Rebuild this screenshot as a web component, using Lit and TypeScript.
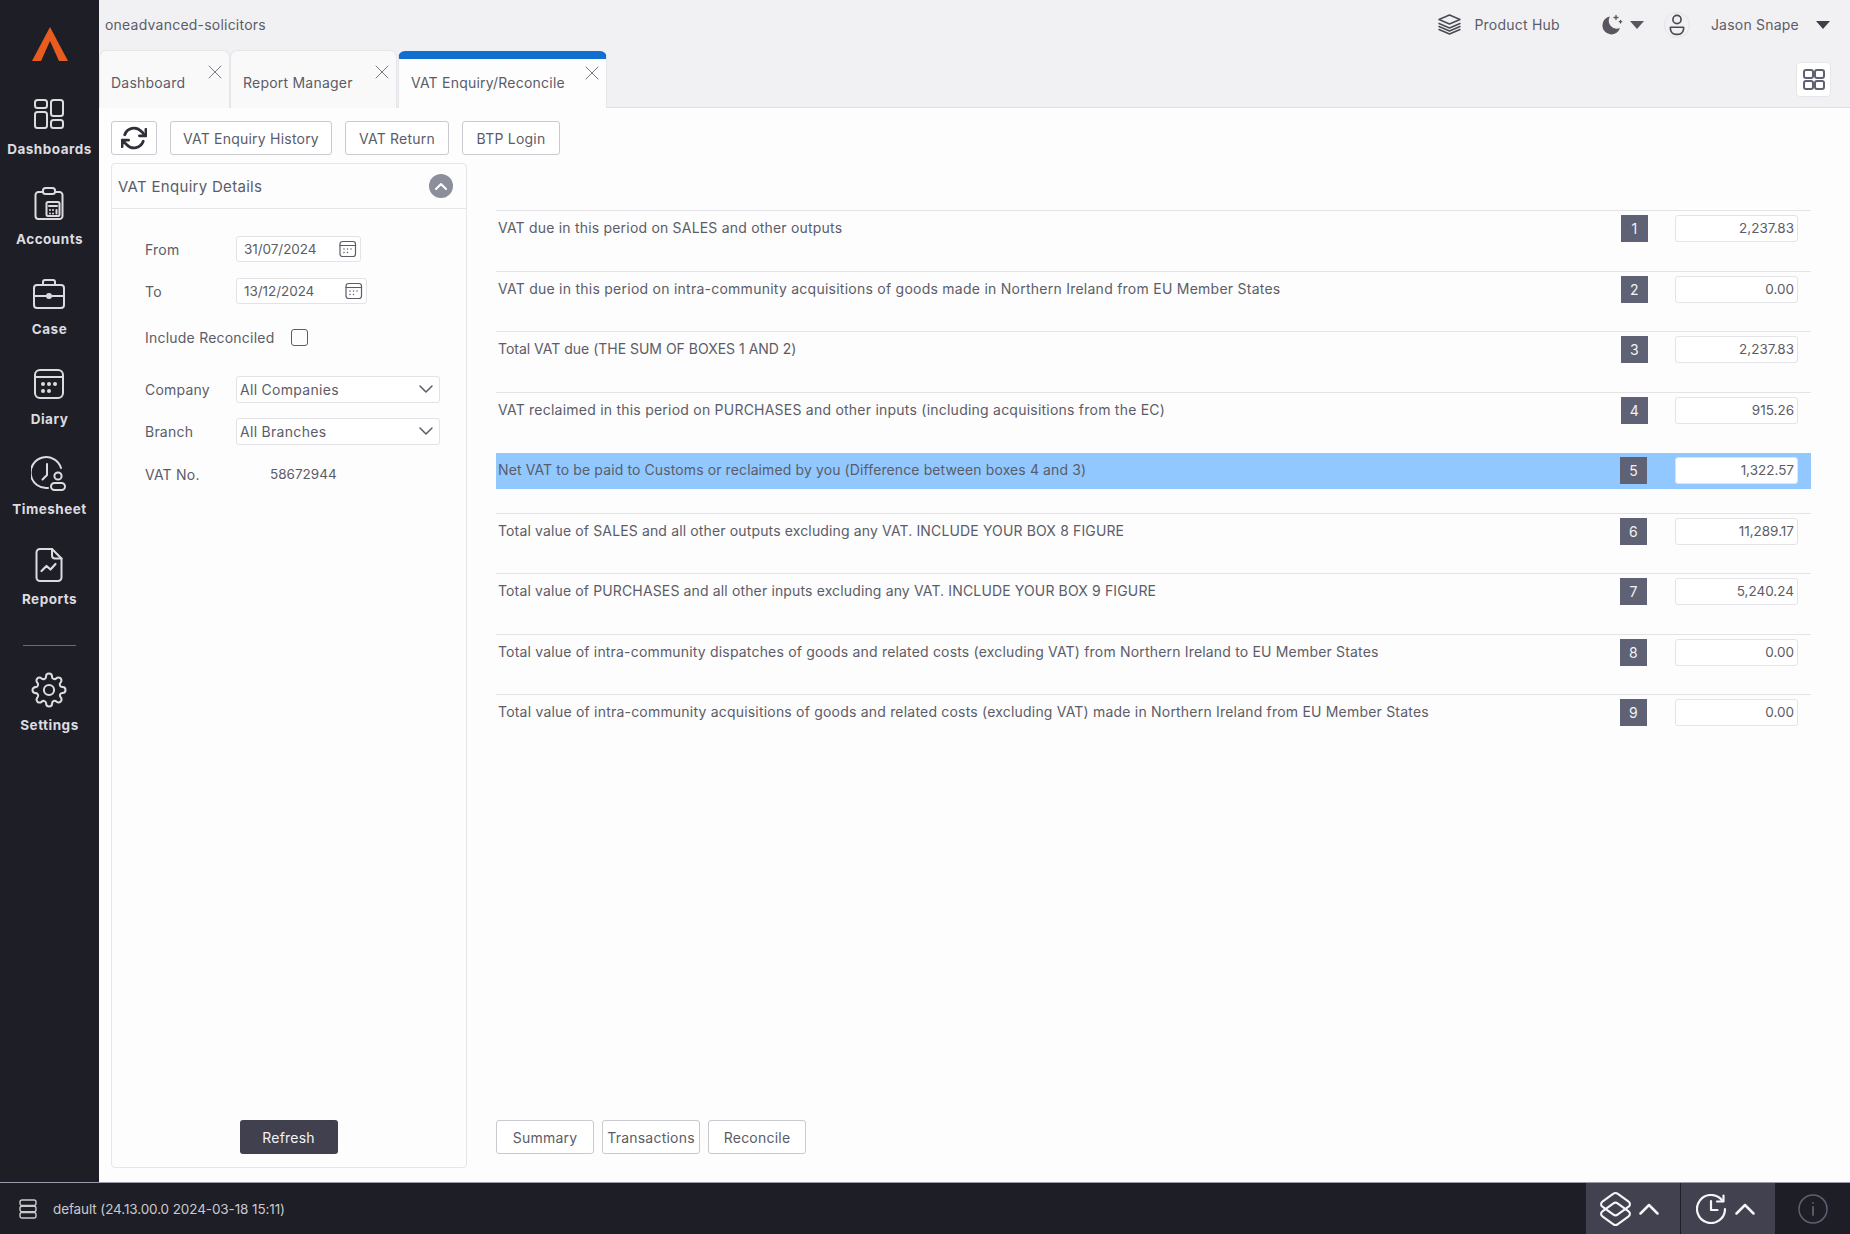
import { LitElement, html, css, svg } from "lit";
import { customElement } from "lit/decorators.js";

const rows: [string, string, number][] = [
  ["VAT due in this period on SALES and other outputs", "2,237.83", 0.2],
  ["VAT due in this period on intra-community acquisitions of goods made in Northern Ireland from EU Member States", "0.00", 0.25],
  ["Total VAT due (THE SUM OF BOXES 1 AND 2)", "2,237.83", -0.01],
  ["VAT reclaimed in this period on PURCHASES and other inputs (including acquisitions from the EC)", "915.26", 0.23],
  ["Net VAT to be paid to Customs or reclaimed by you (Difference between boxes 4 and 3)", "1,322.57", 0.11],
  ["Total value of SALES and all other outputs excluding any VAT. INCLUDE YOUR BOX 8 FIGURE", "11,289.17", 0.14],
  ["Total value of PURCHASES and all other inputs excluding any VAT. INCLUDE YOUR BOX 9 FIGURE", "5,240.24", 0.14],
  ["Total value of intra-community dispatches of goods and related costs (excluding VAT) from Northern Ireland to EU Member States", "0.00", 0.18],
  ["Total value of intra-community acquisitions of goods and related costs (excluding VAT) made in Northern Ireland from EU Member States", "0.00", 0.2],
];

const I = (w: number, h: number, vb: string, body: unknown, cls = "") =>
  html`<svg class=${cls} width=${w} height=${h} viewBox=${vb} fill="none" stroke="currentColor" stroke-width="2" stroke-linecap="round" stroke-linejoin="round">${body}</svg>`;

const navIcons: Record<string, unknown> = {
  Dashboards: I(32, 32, "0 0 32 32", svg`<rect x="2" y="2" width="12" height="8" rx="2.5"/><rect x="2" y="14" width="12" height="16" rx="2.5"/><rect x="18" y="2" width="12" height="16" rx="2.5"/><rect x="18" y="22" width="12" height="8" rx="2.5"/>`),
  Accounts: I(32, 36, "0 0 32 36", svg`<path d="M10 6H5.5A3 3 0 0 0 2.500 9v21a3 3 0 0 0 3 3h21a3 3 0 0 0 3-3V9a3 3 0 0 0-3-3H22"/><rect x="10" y="2" width="12" height="6" rx="2.500"/><rect x="13.500" y="16" width="13" height="14" rx="1.500"/><path d="M16 20h8M17 24v.1M20 24v.1M23.500 24v3.500M17 27.500v.1M20 27.500v.1"/>`),
  Case: I(34, 32, "0 0 34 32", svg`<rect x="2" y="7" width="30" height="23" rx="3"/><path d="M11 7V4a2 2 0 0 1 2-2h8a2 2 0 0 1 2 2v3M2 18h12M20 18h12"/><circle cx="17" cy="18" r="2" fill="currentColor"/>`),
  Diary: I(32, 32, "0 0 32 32", svg`<rect x="2" y="2" width="28" height="28" rx="5"/><path d="M2 9h28"/><g fill="currentColor" stroke="none"><circle cx="10" cy="16" r="2"/><circle cx="16" cy="16" r="2"/><circle cx="22" cy="16" r="2"/><circle cx="10" cy="23" r="2"/><circle cx="16" cy="23" r="2"/></g>`),
  Timesheet: I(36, 36, "0 0 36 36", svg`<path d="M30 12A15.500 15.500 0 1 0 17 32"/><path d="M16 8v11l-4.500 4.500"/><circle cx="27" cy="20" r="3.600"/><rect x="20" y="27" width="14" height="7" rx="3.500"/>`),
  Reports: I(30, 35, "0 0 30 35", svg`<path d="M18 2H6a3.500 3.500 0 0 0-3.500 3.500v25A3.500 3.500 0 0 0 6 34h18a3.500 3.500 0 0 0 3.500-3.500V11.500z"/><path d="M18 2v6.500a3 3 0 0 0 3 3h6.500"/><path d="M7.500 24l5-5 4 3.500 5-5.500" stroke-width="2.200"/>`),
  Settings: I(36, 36, "0 0 24 24", svg`<circle cx="12" cy="12" r="3.400" stroke-width="1.350"/><path stroke-width="1.350" d="M19.400 15a1.650 1.650 0 0 0 .33 1.820l.06.06a2 2 0 0 1 0 2.830 2 2 0 0 1-2.830 0l-.06-.06a1.650 1.650 0 0 0-1.820-.33 1.650 1.650 0 0 0-1 1.510V21a2 2 0 0 1-2 2 2 2 0 0 1-2-2v-.09A1.650 1.650 0 0 0 9 19.400a1.650 1.650 0 0 0-1.820.33l-.06.06a2 2 0 0 1-2.830 0 2 2 0 0 1 0-2.830l.06-.06a1.650 1.650 0 0 0 .33-1.820 1.650 1.650 0 0 0-1.510-1H3a2 2 0 0 1-2-2 2 2 0 0 1 2-2h.09A1.650 1.650 0 0 0 4.600 9a1.650 1.650 0 0 0-.33-1.820l-.06-.06a2 2 0 0 1 0-2.830 2 2 0 0 1 2.830 0l.06.06a1.650 1.650 0 0 0 1.820.33H9a1.650 1.650 0 0 0 1-1.510V3a2 2 0 0 1 2-2 2 2 0 0 1 2 2v.09a1.650 1.650 0 0 0 1 1.510 1.650 1.650 0 0 0 1.820-.33l.06-.06a2 2 0 0 1 2.830 0 2 2 0 0 1 0 2.830l-.06.06a1.650 1.650 0 0 0-.33 1.820V9a1.650 1.650 0 0 0 1.510 1H21a2 2 0 0 1 2 2 2 2 0 0 1-2 2h-.09a1.650 1.650 0 0 0-1.510 1z"/>`),
};

const xIcon = I(14, 14, "0 0 14 14", svg`<path d="M1 1l12 12M13 1L1 13" stroke-width="1"/>`, "close");
const cal = I(18, 18, "0 0 18 18", svg`<rect x="1" y="1.500" width="15.500" height="15" rx="2.500" stroke-width="1.200"/><path d="M1 5.500h15.500" stroke-width="1.200"/><path d="M5 9v.1M8.500 9v.1M12 9v.1M5 12.500v.1M8.500 12.500v.1" stroke-width="1.500"/>`);
const chev = I(14, 8, "0 0 14 8", svg`<path d="M1 1l6 6 6-6" stroke-width="1.500"/>`);
const up = I(20, 12, "0 0 20 12", svg`<path d="M1.500 10.500L10 2l8.500 8.500" stroke-width="2.500"/>`);

@customElement("app-root")
export class AppRoot extends LitElement {
  static styles = css`
    :host {
      display: grid;
      grid-template-columns: 99px 1fr;
      grid-template-rows: 1fr 52px;
      width: 1850px;
      height: 1234px;
      overflow: hidden;
      font-family: Inter, "Liberation Sans", sans-serif;
      font-size: 14px;
      letter-spacing: 0.22px;
      color: #5c5c68;
      background: #fdfdfd;
    }
    svg { display: block; flex: none; }
    /* sidebar */
    .side {
      background: #1e1e26;
      display: flex;
      flex-direction: column;
      align-items: center;
      padding-top: 27px;
      color: #dcdce0;
    }
    .logo { margin-bottom: 35px; }
    .nav {
      height: 90px;
      width: 100%;
      display: flex;
      flex-direction: column;
      align-items: center;
      flex: none;
    }
    .nav .ic { height: 42px; margin-top: -3px; display: flex; align-items: center; justify-content: center; margin-left: -1px; }
    .nav span { font-weight: 700; font-size: 13.5px; letter-spacing: 0.5px; margin-top: 6px; line-height: 17px; }
    .divider { width: 53px; height: 1px; background: #6a6a72; margin: 9px 0 26px; flex: none; }
    /* main */
    .main { display: flex; flex-direction: column; min-width: 0; min-height: 0; }
    .top {
      height: 51px;
      box-sizing: border-box;
      flex: none;
      background: #f1f1f4;
      display: flex;
      align-items: center;
      padding: 0 20px 2px 6px;
      font-size: 14px;
    }
    .top .org { margin-right: auto; }
    .hub { color: #4a4a55; margin-right: 13px; }
    .moon { color: #5b5560; margin-left: 41px; }
    .caret { width: 0; height: 0; border-left: 7px solid transparent; border-right: 7px solid transparent; border-top: 8px solid #5b5560; margin-left: 7px; }
    .caret.u { border-top-color: #3f3f4a; margin-left: 17px; border-left-width: 7.500px; border-right-width: 7.500px; }
    .avatar {
      width: 26px; height: 26px; border-radius: 50%; border: 1px solid #e4e4e8; box-sizing: border-box;
      display: flex; align-items: center; justify-content: center; margin-left: 20px; margin-right: 21px; color: #4a4a55;
    }
    .tabs {
      height: 57px;
      flex: none;
      background: #f1f1f4;
      border-bottom: 1px solid #dfdfe4;
      box-sizing: border-box;
      display: flex;
      align-items: flex-end;
      padding-right: 19px;
    }
    .tab {
      position: relative;
      height: 58px;
      box-sizing: border-box;
      background: #f9f9fa;
      border: 1px solid #e6e6ea;
      border-bottom: none;
      border-radius: 7px 7px 0 0;
      display: flex;
      align-items: center;
      padding: 5px 0 0 11px;
      margin-bottom: -1px;
    }
    .tab.second { padding-left: 12px; }
    .tab.active {
      height: 57px;
      background: #fdfdfd;
      border-top: 8px solid #1170cf;
      padding: 0 0 3px 12px;
      margin-left: 1px;
    }
    .tab .close { position: absolute; right: 7px; top: 14px; color: #7a7a84; }
    .tab.active .close { top: 7px; right: 7px; }
    .gridbtn {
      margin-left: auto; align-self: flex-start; margin-top: 11px;
      width: 35px; height: 35px; box-sizing: border-box; background: #fff; border: 1px solid #e6e6ea; border-radius: 4px;
      display: flex; align-items: center; justify-content: center; color: #5f6072;
    }
    .body {
      flex: 1;
      min-height: 0;
      display: flex;
      flex-direction: column;
      padding: 13px 39px 14px 12px;
    }
    .btn {
      height: 34px;
      box-sizing: border-box;
      border: 1px solid #c9c9d0;
      border-radius: 3px;
      background: #fff;
      color: #5c5c68;
      display: flex;
      align-items: center;
      justify-content: center;
      flex: none;
      font: inherit;
      letter-spacing: inherit;
    }
    .toolbar { display: flex; gap: 13px; margin-bottom: 8px; flex: none; }
    .content { flex: 1; min-height: 0; display: flex; gap: 29px; }
    .panel {
      width: 356px;
      flex: none;
      box-sizing: border-box;
      border: 1px solid #e6e6ea;
      border-radius: 4px;
      display: flex;
      flex-direction: column;
    }
    .phead {
      height: 45px; flex: none; box-sizing: border-box; border-bottom: 1px solid #e6e6ea;
      display: flex; align-items: center; justify-content: space-between;
      padding: 0 13px 0 6px; font-size: 15px; letter-spacing: 0.3px;
    }
    .collapse { width: 24px; height: 24px; border-radius: 50%; background: #8c8e9c; display: flex; align-items: center; justify-content: center; color: #fff; }
    .form { flex: 1; padding: 27px 0 0 33px; display: flex; flex-direction: column; }
    .frow { display: flex; align-items: center; height: 26px; flex: none; }
    .frow > label { width: 91px; flex: none; }
    .field {
      height: 26px; box-sizing: border-box; border: 1px solid #e2e2e7; border-radius: 3px; background: #fff;
      display: flex; align-items: center; justify-content: space-between; font-size: 13.500px;
    }
    .date { padding: 0 3px 0 7px; letter-spacing: -0.05px; }
    .sel { width: 204px; padding: 0 6px 0 3px; height: 27px; font-size: 14px; letter-spacing: 0.3px; }
    .check { width: 17px; height: 17px; box-sizing: border-box; border: 1.500px solid #5c5c68; border-radius: 3px; margin-left: 17px; }
    .mt16 { margin-top: 16px; }
    .mt20 { margin-top: 20px; }
    .mt26 { margin-top: 26px; }
    .mt17 { margin-top: 17px; }
    .vatno { margin-left: 34px; font-size: 13.500px; letter-spacing: 0; }
    .pfoot { display: flex; justify-content: center; padding-bottom: 13px; }
    .refresh { width: 98px; background: #40404e; border: none; color: #f2f2f4; margin-right: 1px; }
    .right { flex: 1; min-width: 0; display: flex; flex-direction: column; padding-top: 47px; }
    .row {
      position: relative;
      height: 60.500px;
      flex: none;
      box-sizing: border-box;
      border-top: 1px solid #e3e3e8;
      display: flex;
      align-items: flex-start;
      padding: 4px 13px 0 2px;
    }
    .row .t { position: relative; flex: 1; line-height: 26px; white-space: nowrap; }
    .row.hl::before {
      content: ""; position: absolute; left: 0; right: 0; top: 0; height: 36px; background: #90c8ff;
    }
    .row.hl { border-top-color: transparent; }
    .badge {
      position: relative; width: 27px; height: 27px; background: #5f6175; color: #f2f2f5;
      display: flex; align-items: center; justify-content: center; flex: none; margin-right: 27px;
    }
    .row:nth-child(n + 5) .badge { margin-right: 28px; }
    .val {
      position: relative; width: 123px; height: 27px; box-sizing: border-box; border: 1px solid #e3e3e8; border-radius: 3px; background: #fff;
      text-align: right; padding-right: 3px; line-height: 25px; flex: none; font-size: 13.500px; letter-spacing: 0;
    }
    .bottom { margin-top: auto; display: flex; gap: 8px; padding-bottom: 14px; }
    .bottom .btn { width: 98px; }
    .foot {
      grid-column: 1 / 3;
      background: #1e1e26;
      border-top: 1px solid #9a9aa8;
      box-sizing: border-box;
      display: flex;
      align-items: stretch;
      color: #c9c9ce;
      font-size: 13.500px;
      letter-spacing: -0.1px;
    }
    .foot .ver { display: flex; align-items: center; gap: 16px; padding-left: 19px; margin-right: auto; }
    .fbtn { box-sizing: border-box; width: 94px; margin-right: 1px; background: #41414f; display: flex; align-items: center; justify-content: center; color: #f5f5f7; }
    .fbtn.a { gap: 7px; padding-right: 8px; }
    .fbtn.b { gap: 9px; padding-right: 6px; }
    .info { width: 74px; display: flex; align-items: center; justify-content: center; color: #5f6072; }
  `;

  render() {
    return html`
      <aside class="side">
        <svg class="logo" width="36" height="34" viewBox="0 0 36 34"><path fill="#e85d1f" d="M18 0L36 34H27L18 14 9 34H0z"/></svg>
        ${Object.entries(navIcons).map(([k, v]) => html`
          ${k === "Settings" ? html`<div class="divider"></div>` : ""}
          <div class="nav"><div class="ic">${v}</div><span>${k}</span></div>`)}
      </aside>
      <div class="main">
        <header class="top">
          <span class="org">oneadvanced-solicitors</span>
          <span class="hub">${I(23, 21, "0 0 23 21", svg`<path stroke-width="1.500" d="M11.500 1L22 5.500 11.500 10 1 5.500zM1 9.500L11.500 14 22 9.500M1 12.500L11.500 17 22 12.500M1 15.500L11.500 20 22 15.500"/>`)}</span>
          <span>Product Hub</span>
          <span class="moon">${I(22, 22, "0 0 22 22", svg`<path fill="currentColor" stroke="none" d="M9 2.500a9 9 0 1 0 10 11.500A8 8 0 0 1 9 2.500z"/><path stroke-width="1.300" d="M15 1.500v4M13 3.500h4M19.500 6.500v2.500M18.300 7.700h2.400"/>`)}</span>
          <span class="caret"></span>
          <span class="avatar">${I(18, 22, "0 0 16 20", svg`<circle cx="8" cy="5" r="3.700" stroke-width="1.500"/><path stroke-width="1.500" d="M2 12h12v1.500a5 5 0 0 1-5 5H7a5 5 0 0 1-5-5z"/>`)}</span>
          <span>Jason Snape</span>
          <span class="caret u"></span>
        </header>
        <nav class="tabs">
          <div class="tab" style="width:131px">Dashboard${xIcon}</div>
          <div class="tab second" style="width:167px">Report Manager${xIcon}</div>
          <div class="tab active" style="width:209px">VAT Enquiry/Reconcile${xIcon}</div>
          <div class="gridbtn">${I(22, 21, "0 0 22 21", svg`<rect x="1" y="1" width="9" height="8" rx="2"/><rect x="12" y="1" width="9" height="8" rx="2"/><rect x="1" y="12" width="9" height="8" rx="2"/><rect x="12" y="12" width="9" height="8" rx="2"/>`)}</div>
        </nav>
        <main class="body">
          <div class="toolbar">
            <button class="btn" style="width:46px;color:#2f2f3a">${I(26, 26, "0 0 24 24", svg`<path stroke-width="2.600" d="M23 4v6h-6M1 20v-6h6M3.500 9a9 9 0 0 1 14.900-3.400L23 10M1 14l4.600 4.400A9 9 0 0 0 20.500 15"/>`)}</button>
            <button class="btn" style="width:162px">VAT Enquiry History</button>
            <button class="btn" style="width:104px">VAT Return</button>
            <button class="btn" style="width:98px">BTP Login</button>
          </div>
          <div class="content">
            <section class="panel">
              <div class="phead"><span>VAT Enquiry Details</span><span class="collapse">${I(12, 8, "0 0 12 8", svg`<path d="M1 7l5-5 5 5" stroke-width="2"/>`)}</span></div>
              <div class="form">
                <div class="frow"><label>From</label><div class="field date" style="width:125px">31/07/2024${cal}</div></div>
                <div class="frow mt16"><label>To</label><div class="field date" style="width:131px">13/12/2024${cal}</div></div>
                <div class="frow mt20"><span>Include Reconciled</span><span class="check"></span></div>
                <div class="frow mt26"><label>Company</label><div class="field sel">All Companies${chev}</div></div>
                <div class="frow mt16"><label>Branch</label><div class="field sel">All Branches${chev}</div></div>
                <div class="frow mt17"><label>VAT No.</label><span class="vatno">58672944</span></div>
              </div>
              <div class="pfoot"><button class="btn refresh">Refresh</button></div>
            </section>
            <section class="right">
              ${rows.map((r, i) => html`
                <div class="row ${i === 4 ? "hl" : ""}">
                  <span class="t" style="letter-spacing:${r[2]}px">${r[0]}</span>
                  <span class="badge">${i + 1}</span>
                  <span class="val">${r[1]}</span>
                </div>`)}
              <div class="bottom">
                <button class="btn">Summary</button>
                <button class="btn">Transactions</button>
                <button class="btn">Reconcile</button>
              </div>
            </section>
          </div>
        </main>
      </div>
      <footer class="foot">
        <div class="ver">${I(18, 20, "0 0 18 20", svg`<rect x="1" y="1" width="16" height="5.500" rx="2" stroke-width="1.400"/><rect x="1" y="7.250" width="16" height="5.500" rx="2" stroke-width="1.400"/><rect x="1" y="13.500" width="16" height="5.500" rx="2" stroke-width="1.400"/>`)}<span>default (24.13.00.0 2024-03-18 15:11)</span></div>
        <div class="fbtn a">${I(33, 36, "0 0 34 36", svg`<path d="M14.500 2.500a4 4 0 0 1 5 0l11 8a3 3 0 0 1 0 5l-11 8a4 4 0 0 1-5 0l-11-8a3 3 0 0 1 0-5z" stroke-width="2.200"/><path d="M14.500 12.500a4 4 0 0 1 5 0l11 8a3 3 0 0 1 0 5l-11 8a4 4 0 0 1-5 0l-11-8a3 3 0 0 1 0-5z" stroke-width="2.200"/>`)}${up}</div>
        <div class="fbtn b">${I(30, 30, "0 0 30 30", svg`<path d="M26.500 7A14 14 0 1 0 29 15" stroke-width="2.200"/><path d="M27.500 1.500V7.500H21" stroke-width="2.200"/><path d="M15 7v9h6.500" stroke-width="2.200"/>`)}${up}</div>
        <div class="info">${I(30, 30, "0 0 30 30", svg`<circle cx="15" cy="15" r="14" stroke-width="1.500"/><path d="M15 13v8M15 9v.1" stroke-width="1.800"/>`)}</div>
      </footer>
    `;
  }
}
